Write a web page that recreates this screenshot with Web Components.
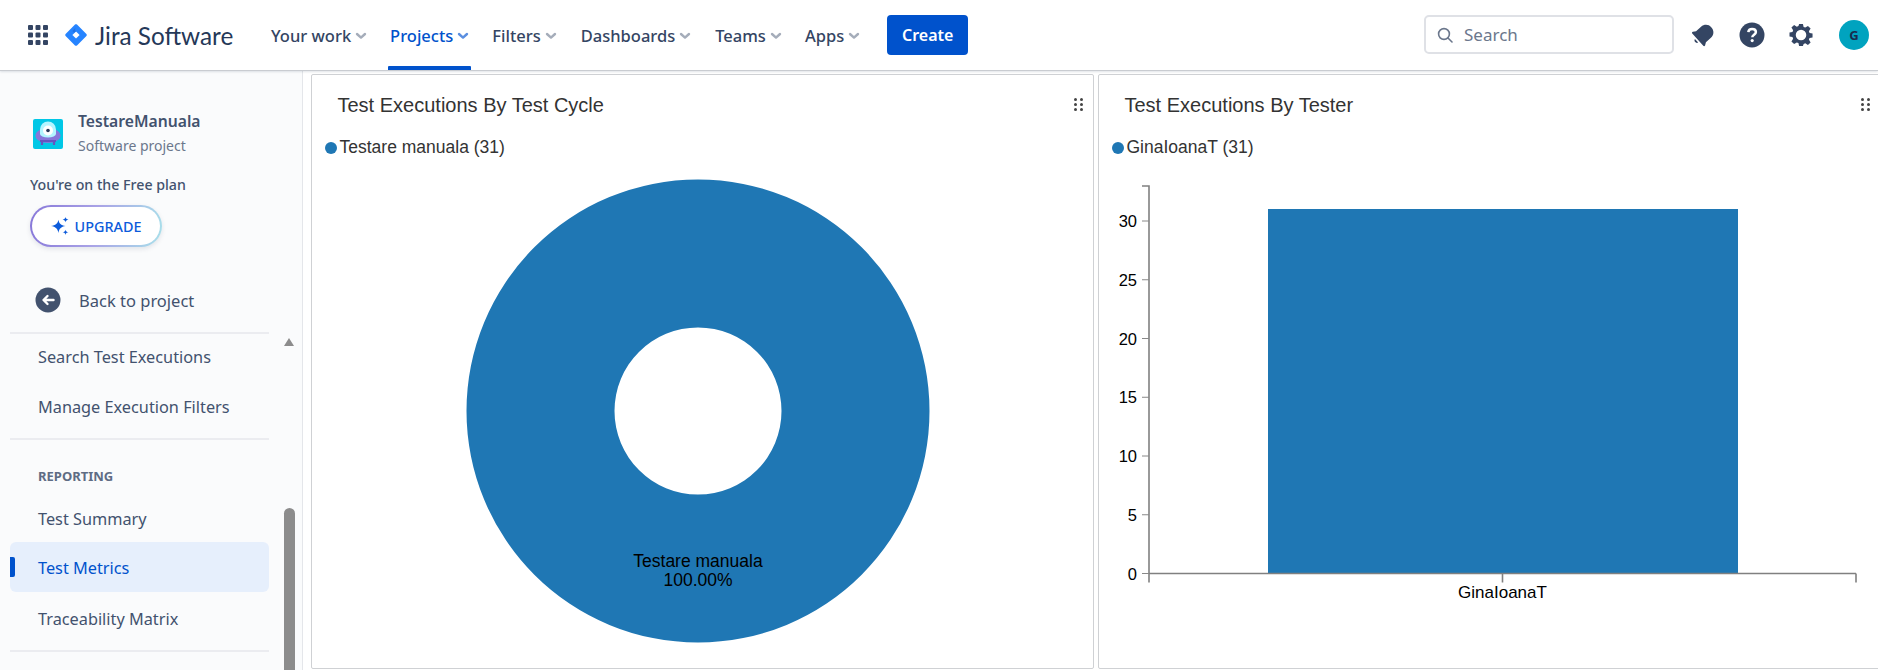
<!DOCTYPE html>
<html>
<head>
<meta charset="utf-8">
<title>Test Metrics</title>
<style>
    html, body { margin: 0; height: 100%; overflow: hidden; background: #fff; }
    body { font-family: "Noto Sans", "Liberation Sans", sans-serif; }
</style>
</head>
<body>
<jira-app>
    <jira-header slot="header"></jira-header>
    <jira-sidebar slot="sidebar"></jira-sidebar>
    <chart-panel slot="panels" heading="Test Executions By Test Cycle" legend="Testare manuala (31)"><donut-chart></donut-chart></chart-panel>
    <chart-panel slot="panels" heading="Test Executions By Tester" legend="GinaIoanaT (31)"><bar-chart></bar-chart></chart-panel>
</jira-app>
<script>
(function () {
    const CHEVRON = '<svg width="10" height="6" viewBox="0 0 10 6"><path d="M1 1l4 3.6L9 1" fill="none" stroke="currentColor" stroke-width="2.4" stroke-linecap="round" stroke-linejoin="round"/></svg>';

    class JiraApp extends HTMLElement {
        connectedCallback() {
            this.attachShadow({ mode: 'open' });
            this.shadowRoot.innerHTML = `
                <style>
                    :host { display: flex; flex-direction: column; width: 1878px; height: 670px; overflow: hidden; }
                    .main { flex: 1; min-height: 0; display: flex; }
                    .panels { flex: none; display: grid; grid-template-columns: 783px 783px; gap: 4px; margin: 3px 0 1px 8px; }
                </style>
                <slot name="header"></slot>
                <div class="main">
                    <slot name="sidebar"></slot>
                    <div class="panels"><slot name="panels"></slot></div>
                </div>
            `;
        }
    }

    class NavItem extends HTMLElement {
        connectedCallback() {
            this.attachShadow({ mode: 'open' });
            this.shadowRoot.innerHTML = `
                <style>
                    :host { display: flex; align-items: center; gap: 5px; height: 70px; padding: 0 3px; margin-right: 18px; box-sizing: border-box; position: relative; color: #344563; font-size: 16.5px; font-weight: 500; }
                    :host([active]) { color: #0052cc; }
                    svg { color: #a5adba; margin-top: 1px; overflow: visible; }
                    :host([active]) svg { color: #5b8fe0; }
                    :host([active])::after { content: ""; position: absolute; left: 1px; right: 0; bottom: 0; height: 4px; background: #0052cc; border-radius: 1px 1px 0 0; }
                </style>
                <slot></slot>${CHEVRON}
            `;
        }
    }

    class JiraHeader extends HTMLElement {
        connectedCallback() {
            this.attachShadow({ mode: 'open' });
            this.shadowRoot.innerHTML = `
                <style>
                    :host { display: flex; align-items: center; flex: none; height: 71px; box-sizing: border-box; border-bottom: 1px solid #c9ccd1; background: #fff; box-shadow: 0 1px 2px rgba(9, 30, 66, 0.12); position: relative; z-index: 2; padding: 0 9px 0 28px; }
                    .grid { display: block; margin-right: 17px; }
                    .logo { display: flex; align-items: center; gap: 8px; width: 200px; color: #253858; font-family: Lato, sans-serif; font-size: 24.3px; }
                    .nav { display: flex; align-items: center; margin-left: 3px; }
                    .nav nav-item:nth-child(3) { margin-right: 19px; }
                    .nav nav-item:nth-child(4) { margin-right: 19px; }
                    .create { height: 40px; width: 81px; margin-left: 7px; border: 0; border-radius: 4px; background: #0052cc; color: #fff; font: 600 16px "Noto Sans", sans-serif; display: flex; align-items: center; justify-content: center; }
                    .search { display: flex; align-items: center; gap: 11px; width: 250px; height: 39px; margin-left: auto; margin-top: -1px; padding-left: 11px; box-sizing: border-box; border: 2px solid #dfe1e6; border-radius: 5px; color: #6b778c; font-size: 17px; }
                    .icons { display: flex; align-items: center; margin-left: 17px; }
                    .avatar { width: 30px; height: 30px; border-radius: 50%; background: #00a3bf; color: #172b4d; font-size: 13px; font-weight: 700; display: flex; align-items: center; justify-content: center; }
                    .icons svg { display: block; color: #344563; }
                </style>
                <svg class="grid" width="20" height="20" viewBox="0 0 20 20" fill="#344563">
                    <rect x="0" y="0" width="5" height="5" rx="1"/><rect x="7.5" y="0" width="5" height="5" rx="1"/><rect x="15" y="0" width="5" height="5" rx="1"/>
                    <rect x="0" y="7.5" width="5" height="5" rx="1"/><rect x="7.5" y="7.5" width="5" height="5" rx="1"/><rect x="15" y="7.5" width="5" height="5" rx="1"/>
                    <rect x="0" y="15" width="5" height="5" rx="1"/><rect x="7.5" y="15" width="5" height="5" rx="1"/><rect x="15" y="15" width="5" height="5" rx="1"/>
                </svg>
                <div class="logo">
                    <svg width="22" height="22" viewBox="0 0 22 22"><path fill="#2684ff" d="M11 0.2c.4 0 .7.2 1 .4l9.4 9.4c.5.6.5 1.4 0 2l-9.4 9.4c-.6.5-1.4.5-2 0L.6 12c-.5-.6-.5-1.4 0-2L10 .6c.3-.2.6-.4 1-.4z"/><path fill="#fff" d="M11 7.4L14.6 11 11 14.6 7.4 11z"/><path fill="#1a66d6" d="M11 7.4c-1.2-1.2-1.2-3 0-4.2l-3.6 3.7L9.2 8.8z" opacity=".6"/></svg>
                    <span>Jira Software</span>
                </div>
                <div class="nav">
                    <nav-item>Your work</nav-item>
                    <nav-item active>Projects</nav-item>
                    <nav-item>Filters</nav-item>
                    <nav-item>Dashboards</nav-item>
                    <nav-item>Teams</nav-item>
                    <nav-item>Apps</nav-item>
                </div>
                <div class="create">Create</div>
                <div class="search">
                    <svg width="16" height="16" viewBox="0 0 16 16" fill="none" stroke="#6b778c" stroke-width="1.6" stroke-linecap="round"><circle cx="7" cy="7" r="5.4"/><path d="M11 11l4 4"/></svg>
                    <span>Search</span>
                </div>
                <div class="icons">
                    <svg width="26" height="26" viewBox="0 0 24 24" style="margin:0 23px 0 -1px"><g transform="rotate(48 12 12)" fill="currentColor"><path d="M12 1.5c-4 0-6.8 3-6.8 6.800v6.200L3.600 17c-.4.7 0 1.500.8 1.500h15.200c.8 0 1.200-.8.800-1.500l-1.600-2.500V8.300c0-3.800-2.800-6.800-6.800-6.800z"/><path d="M9.800 20h4.400c-.3 1.100-1.100 1.800-2.200 1.800s-1.900-.7-2.200-1.800z"/></g></svg>
                    <svg width="26" height="26" viewBox="0 0 26 26" style="margin-right:24px"><circle cx="13" cy="13" r="12.5" fill="currentColor"/><path d="M9.300 10.200c.2-2 1.700-3.200 3.800-3.200 2.200 0 3.800 1.300 3.800 3.100 0 2.600-3.600 2.800-3.600 5.200" fill="none" stroke="#fff" stroke-width="2.5"/><circle cx="13.200" cy="18.600" r="1.6" fill="#fff"/></svg>
                    <svg width="24" height="24" viewBox="0 0 24 24" style="margin-right:26px"><path fill="currentColor" fill-rule="evenodd" d="M10 1h4l.7 3.100 1.700.7L19.200 3 22 5.800l-1.800 2.800.7 1.700L24 11v4l-3.100.6-.7 1.700 1.800 2.900-2.800 2.800-2.800-1.800-1.700.7L14 24h-4l-.7-3.100-1.700-.7L4.800 22 2 19.200l1.800-2.900-.7-1.700L0 14v-4l3.100-.7.7-1.700L2 4.800 4.800 2l2.800 1.800 1.700-.7zM12 7a5.500 5.500 0 1 0 0 11 5.500 5.500 0 0 0 0-11z" transform="translate(.5 0) scale(.96)"/></svg>
                    <div class="avatar">G</div>
                </div>
            `;
        }
    }

    class SideLink extends HTMLElement {
        connectedCallback() {
            this.attachShadow({ mode: 'open' });
            this.shadowRoot.innerHTML = `
                <style>
                    :host { display: flex; align-items: center; height: 50px; padding-left: 28px; box-sizing: border-box; border-radius: 6px; position: relative; color: #42526e; font-size: 16.3px; }
                    :host([selected]) { background: #e6effc; color: #0052cc; margin: -2px 0 2px; padding-top: 2px; }
                    :host([selected])::before { content: ""; position: absolute; left: 0; top: 15px; width: 5px; height: 20px; background: #0052cc; border-radius: 0 2px 2px 0; }
                </style>
                <slot></slot>
            `;
        }
    }

    class JiraSidebar extends HTMLElement {
        connectedCallback() {
            this.attachShadow({ mode: 'open' });
            this.shadowRoot.innerHTML = `
                <style>
                    :host { display: block; flex: none; width: 303px; box-sizing: border-box; background: #fafbfc; border-right: 1px solid #e4e6ea; position: relative; overflow: hidden; }
                    .column { width: 259px; margin-left: 10px; }
                    .project { display: flex; align-items: center; gap: 15px; margin: 39px 0 0 23px; }
                    .project svg { display: block; flex: none; }
                    .name { color: #42526e; font-size: 15.7px; font-weight: 600; line-height: 22px; }
                    .type { color: #6b778c; font-size: 14px; line-height: 22px; margin-top: 3px; }
                    .plan { margin: 17px 0 0 20px; color: #42526e; font-size: 14.2px; font-weight: 500; line-height: 22px; }
                    .upgrade { display: flex; align-items: center; justify-content: center; gap: 6px; width: 132px; height: 42px; margin: 9px 0 0 20px; box-sizing: border-box; border: 2px solid transparent; border-radius: 21px; color: #0c5bdb; font-size: 14.4px; font-weight: 500; background: linear-gradient(#fff, #fff) padding-box, linear-gradient(100deg, #8777d9, #a9a3e6 50%, #a8e0ea) border-box; box-shadow: 0 2px 5px rgba(9, 30, 66, 0.1); }
                    .back { display: flex; align-items: center; gap: 18px; height: 50px; margin: 28px 0 0 25px; color: #42526e; font-size: 16.5px; }
                    hr { border: 0; height: 2px; background: #ebecf0; margin: 0; }
                    .back + hr { margin: 7px 0 -2px; }
                    .section { color: #5e6c84; font-size: 13px; font-weight: 700; line-height: 18px; margin: 27px 0 9px 28px; }
                    .bar { position: absolute; left: 283px; top: 0; bottom: 0; width: 12px; }
                    .arrow { position: absolute; left: 1px; top: 267px; width: 0; height: 0; border: 5.5px solid transparent; border-top: 0; border-bottom: 8px solid #8c8c8c; }
                    .thumb { position: absolute; left: 1px; top: 437px; width: 11px; height: 180px; background: #8c8c8c; border-radius: 5.5px; }
                </style>
                <div class="column">
                    <div class="project">
                        <svg width="30" height="30" viewBox="0 0 30 30">
                            <rect width="30" height="30" rx="2" fill="#00c7e6"/>
                            <ellipse cx="15" cy="16.5" rx="12.5" ry="7.5" fill="#8777d9"/>
                            <path d="M7 15V10.500a8 8 0 0 1 16 0V15a8 3.500 0 0 1-16 0z" fill="#b3f5ff"/>
                            <circle cx="15" cy="11.5" r="5" fill="#fff"/><circle cx="15" cy="11.5" r="1.8" fill="#253858"/>
                            <path d="M9 22v4M21 22v4" stroke="#6554c0" stroke-width="2.2"/><path d="M7 22h16" stroke="#6554c0" stroke-width="2"/>
                        </svg>
                        <div><div class="name">TestareManuala</div><div class="type">Software project</div></div>
                    </div>
                    <div class="plan">You're on the Free plan</div>
                    <div class="upgrade">
                        <svg width="18" height="18" viewBox="0 0 17 17" fill="#0c5bdb"><path d="M7 2.500c.6 3.500 2.400 5.200 6.800 6-4.400.8-6.200 2.500-6.800 6.500-.6-4-2.600-5.700-7-6.500C4.400 7.700 6.400 6 7 2.500z"/><path d="M13.700 0c.3 1.500 1 2.200 2.800 2.500-1.800.3-2.500 1-2.800 2.500-.3-1.500-1-2.200-2.800-2.500 1.800-.3 2.500-1 2.800-2.500zM13.700 12c.3 1.500 1 2.200 2.800 2.500-1.800.3-2.500 1-2.800 2.500-.3-1.500-1-2.200-2.800-2.500 1.800-.3 2.500-1 2.800-2.500z"/></svg>
                        <span>UPGRADE</span>
                    </div>
                    <div class="back">
                        <svg width="26" height="26" viewBox="0 0 26 26"><circle cx="13" cy="13" r="12.5" fill="#42526e"/><path d="M18.500 13H9M12.500 9l-4 4 4 4" fill="none" stroke="#fff" stroke-width="2.4" stroke-linecap="round" stroke-linejoin="round"/></svg>
                        <span>Back to project</span>
                    </div>
                    <hr>
                    <side-link>Search Test Executions</side-link>
                    <side-link>Manage Execution Filters</side-link>
                    <hr style="margin-top:6px">
                    <div class="section">REPORTING</div>
                    <side-link>Test Summary</side-link>
                    <side-link selected>Test Metrics</side-link>
                    <side-link>Traceability Matrix</side-link>
                    <hr style="margin-top:6px">
                </div>
                <div class="bar"><div class="arrow"></div><div class="thumb"></div></div>
            `;
        }
    }

    class ChartPanel extends HTMLElement {
        connectedCallback() {
            this.attachShadow({ mode: 'open' });
            this.shadowRoot.innerHTML = `
                <style>
                    :host { display: flex; flex-direction: column; min-width: 0; box-sizing: border-box; border: 1px solid #cfd1d4; border-radius: 2px; background: #fff; font-family: "Liberation Sans", Arial, sans-serif; position: relative; }
                    h3 { margin: 0; padding: 18px 0 0 25.5px; height: 42px; box-sizing: border-box; font-size: 20px; font-weight: 400; line-height: 24px; color: #333; }
                    .legend { display: flex; align-items: center; gap: 3px; height: 47px; padding: 0 0 0 12.5px; margin-top: 7px; box-sizing: border-box; font-size: 17.5px; color: #333; }
                    .dot { width: 12px; height: 12px; border-radius: 50%; background: #1f77b4; }
                    .drag { position: absolute; right: 10px; top: 23px; display: grid; grid-template-columns: 3px 3px; gap: 2px 3px; }
                    .drag i { width: 3px; height: 3px; background: #444; border-radius: 50%; }
                    .chart { flex: 1; min-height: 0; }
                </style>
                <h3></h3>
                <div class="legend"><span class="dot"></span><span class="label"></span></div>
                <div class="drag"><i></i><i></i><i></i><i></i><i></i><i></i></div>
                <div class="chart"><slot></slot></div>
            `;
            this.shadowRoot.querySelector('h3').textContent = this.getAttribute('heading');
            this.shadowRoot.querySelector('.label').textContent = this.getAttribute('legend');
        }
    }

    class DonutChart extends HTMLElement {
        connectedCallback() {
            this.attachShadow({ mode: 'open' });
            this.shadowRoot.innerHTML = `
                <style>
                    :host { display: block; height: 100%; }
                    svg { display: block; font-family: "Liberation Sans", Arial, sans-serif; }
                </style>
                <svg width="781" height="497" viewBox="0 0 781 497">
                    <path fill="#1f77b4" fill-rule="evenodd" d="M154.500 240a231.500 231.500 0 1 0 463 0a231.500 231.500 0 1 0-463 0zM302.500 240a83.500 83.500 0 1 1 167 0a83.500 83.500 0 1 1-167 0z"/>
                    <text x="386" y="396" text-anchor="middle" font-size="17.5" fill="#000">Testare manuala</text>
                    <text x="386" y="415" text-anchor="middle" font-size="17.5" fill="#000">100.00%</text>
                </svg>
            `;
        }
    }

    class BarChart extends HTMLElement {
        connectedCallback() {
            this.attachShadow({ mode: 'open' });
            const ticks = [0, 5, 10, 15, 20, 25, 30].map((value) => {
                const y = 402.5 - value * 11.75;
                return `<path d="M43 ${y}h7" stroke="#888" stroke-width="1"/><text x="38" y="${y + 6}" text-anchor="end" font-size="16.5" fill="#000">${value}</text>`;
            }).join('');
            this.shadowRoot.innerHTML = `
                <style>
                    :host { display: block; height: 100%; }
                    svg { display: block; font-family: "Liberation Sans", Arial, sans-serif; }
                </style>
                <svg width="781" height="497" viewBox="0 0 781 497">
                    <rect x="169" y="38" width="470" height="364.5" fill="#1f77b4"/>
                    <path d="M43 15h7V402.5M50 402.5H757M50 402.5v9M403.500 402.500v9M757 402.500v9" fill="none" stroke="#808080" stroke-width="1.6"/>
                    ${ticks}
                    <text x="403.500" y="427" text-anchor="middle" font-size="17" fill="#000">GinaIoanaT</text>
                </svg>
            `;
        }
    }

    customElements.define('jira-app', JiraApp);
    customElements.define('nav-item', NavItem);
    customElements.define('jira-header', JiraHeader);
    customElements.define('side-link', SideLink);
    customElements.define('jira-sidebar', JiraSidebar);
    customElements.define('chart-panel', ChartPanel);
    customElements.define('donut-chart', DonutChart);
    customElements.define('bar-chart', BarChart);
})();
</script>
</body>
</html>
